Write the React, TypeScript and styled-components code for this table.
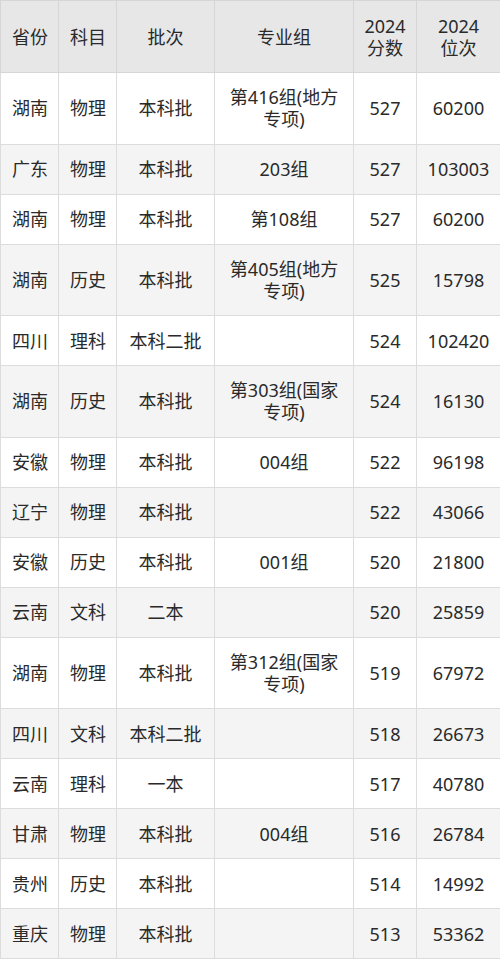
import styled, { createGlobalStyle } from 'styled-components'

const GlobalStyle = createGlobalStyle`
  html, body {
    margin: 0;
    padding: 0;
    background: #ffffff;
  }
`

type Row = {
  province: string
  subject: string
  batch: string
  group: string
  score: string
  rank: string
}

const rows: Row[] = [
  { province: '湖南', subject: '物理', batch: '本科批', group: '第416组(地方专项)', score: '527', rank: '60200' },
  { province: '广东', subject: '物理', batch: '本科批', group: '203组', score: '527', rank: '103003' },
  { province: '湖南', subject: '物理', batch: '本科批', group: '第108组', score: '527', rank: '60200' },
  { province: '湖南', subject: '历史', batch: '本科批', group: '第405组(地方专项)', score: '525', rank: '15798' },
  { province: '四川', subject: '理科', batch: '本科二批', group: '', score: '524', rank: '102420' },
  { province: '湖南', subject: '历史', batch: '本科批', group: '第303组(国家专项)', score: '524', rank: '16130' },
  { province: '安徽', subject: '物理', batch: '本科批', group: '004组', score: '522', rank: '96198' },
  { province: '辽宁', subject: '物理', batch: '本科批', group: '', score: '522', rank: '43066' },
  { province: '安徽', subject: '历史', batch: '本科批', group: '001组', score: '520', rank: '21800' },
  { province: '云南', subject: '文科', batch: '二本', group: '', score: '520', rank: '25859' },
  { province: '湖南', subject: '物理', batch: '本科批', group: '第312组(国家专项)', score: '519', rank: '67972' },
  { province: '四川', subject: '文科', batch: '本科二批', group: '', score: '518', rank: '26673' },
  { province: '云南', subject: '理科', batch: '一本', group: '', score: '517', rank: '40780' },
  { province: '甘肃', subject: '物理', batch: '本科批', group: '004组', score: '516', rank: '26784' },
  { province: '贵州', subject: '历史', batch: '本科批', group: '', score: '514', rank: '14992' },
  { province: '重庆', subject: '物理', batch: '本科批', group: '', score: '513', rank: '53362' },
]

export default function App() {
  return (
    <>
      <GlobalStyle />
      <Table>
        <colgroup>
          <col style={{ width: 58 }} />
          <col style={{ width: 58 }} />
          <col style={{ width: 98 }} />
          <col style={{ width: 139 }} />
          <col style={{ width: 63 }} />
          <col style={{ width: 84 }} />
        </colgroup>
        <thead>
          <HeadRow>
            <HeadCell $left>省份</HeadCell>
            <HeadCell $left>科目</HeadCell>
            <HeadCell>批次</HeadCell>
            <HeadCell>专业组</HeadCell>
            <HeadCell>
              2024
              <br />
              分数
            </HeadCell>
            <HeadCell>
              2024
              <br />
              位次
            </HeadCell>
          </HeadRow>
        </thead>
        <tbody>
          {rows.map((r, i) => (
            <BodyRow key={i} $striped={i % 2 === 1} $tall={r.group.length > 8}>
              <Cell $left>{r.province}</Cell>
              <Cell $left>{r.subject}</Cell>
              <Cell>{r.batch}</Cell>
              <GroupCell>{r.group}</GroupCell>
              <Cell>{r.score}</Cell>
              <Cell>{r.rank}</Cell>
            </BodyRow>
          ))}
        </tbody>
      </Table>
    </>
  )
}

const Table = styled.table`
  width: 500px;
  table-layout: fixed;
  border-collapse: collapse;
  font-family: 'Noto Sans', 'Noto Sans CJK SC', sans-serif;
  font-size: 18px;
  line-height: 22px;
  color: #2a2a2a;
`

const HeadRow = styled.tr`
  height: 72px;
  background: #e7e7e7;
`

const HeadCell = styled.th<{ $left?: boolean }>`
  border: 1px solid #d6d6d6;
  font-weight: normal;
  text-align: ${(p) => (p.$left ? 'left' : 'center')};
  padding: 0 ${(p) => (p.$left ? '4px 0 11px' : '4px')};
  vertical-align: middle;
`

const BodyRow = styled.tr<{ $striped: boolean; $tall: boolean }>`
  height: ${(p) => (p.$tall ? '71.5px' : '50px')};
  background: ${(p) => (p.$striped ? '#f4f4f4' : '#ffffff')};
`

const Cell = styled.td<{ $left?: boolean }>`
  border: 1px solid #dcdcdc;
  text-align: ${(p) => (p.$left ? 'left' : 'center')};
  padding: 0 ${(p) => (p.$left ? '4px 0 11px' : '4px')};
  vertical-align: middle;
  white-space: nowrap;
`

const GroupCell = styled.td`
  border: 1px solid #dcdcdc;
  text-align: center;
  padding: 0 10px;
  vertical-align: middle;
`
